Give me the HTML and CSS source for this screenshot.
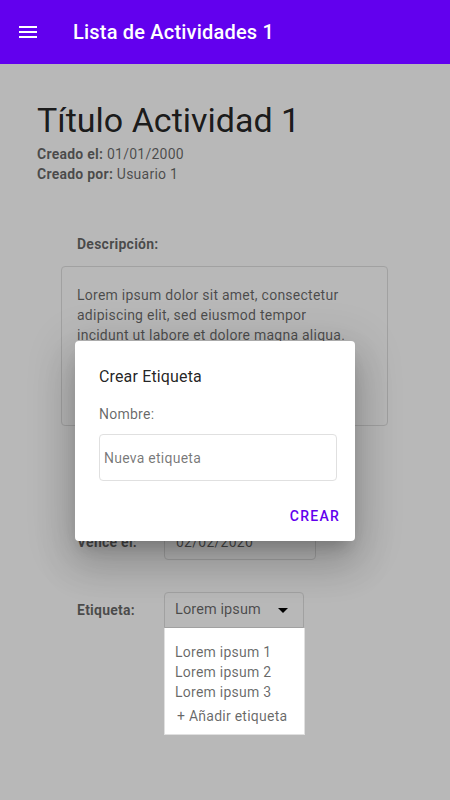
FILE: index.html
```html
<!DOCTYPE html>
<html lang="es">
<head>
<meta charset="utf-8">
<title>Lista de Actividades 1</title>
<link rel="stylesheet" href="styles.css">
</head>
<body>
<header class="appbar">
  <svg class="menu-icon" width="24" height="24" viewBox="0 0 24 24"><path d="M3 18h18v-2H3v2zm0-5h18v-2H3v2zm0-7v2h18V6H3z" fill="#fff"/></svg>
  <span class="appbar-title">Lista de Actividades 1</span>
</header>
<main class="content">
  <h1 class="title">Título Actividad 1</h1>
  <p class="meta"><b>Creado el:</b> 01/01/2000</p>
  <p class="meta"><b>Creado por:</b> Usuario 1</p>

  <section class="fields">
    <div class="field-label">Descripción:</div>
    <div class="desc-box">Lorem ipsum dolor sit amet, consectetur adipiscing elit, sed eiusmod tempor incidunt ut labore et dolore magna aliqua.</div>

    <div class="row row-first">
      <span class="field-label">Inicia el:</span>
      <div class="input-box date">01/01/2020</div>
    </div>
    <div class="row">
      <span class="field-label">Vence el:</span>
      <div class="input-box date">02/02/2020</div>
    </div>
    <div class="row">
      <span class="field-label">Etiqueta:</span>
      <div class="select-wrap">
        <div class="input-box select">
          <span>Lorem ipsum</span>
          <svg class="arrow" width="24" height="24" viewBox="0 0 24 24"><path d="M7 10l5 5 5-5z" fill="#000"/></svg>
        </div>
        <ul class="menu">
          <li>Lorem ipsum 1</li>
          <li>Lorem ipsum 2</li>
          <li>Lorem ipsum 3</li>
          <li class="menu-add">+ Añadir etiqueta</li>
        </ul>
      </div>
    </div>
  </section>
</main>

<div class="scrim"></div>

<div class="dialog">
  <h2 class="dialog-title">Crear Etiqueta</h2>
  <div class="dialog-label">Nombre:</div>
  <div class="dialog-input">Nueva etiqueta</div>
  <div class="dialog-actions">
    <button class="btn-text">CREAR</button>
  </div>
</div>
</body>
</html>
```

FILE: styles.css
```css
* { box-sizing: border-box; }

html, body {
  margin: 0;
  padding: 0;
  height: 100%;
}

body {
  font-family: Roboto, "Noto Sans", "Liberation Sans", sans-serif;
  background: #ffffff;
  color: rgba(0, 0, 0, 0.87);
  position: relative;
  overflow: hidden;
}

.appbar {
  height: 64px;
  background: #6200ee;
  display: flex;
  align-items: center;
  padding-left: 16px;
  gap: 33px;
  position: relative;
  z-index: 5;
}

.menu-icon { display: block; flex: none; }

.appbar-title {
  color: #ffffff;
  font-size: 20px;
  font-weight: 500;
  letter-spacing: 0.2px;
  line-height: 24px;
}

.content {
  padding: 36px 37px 0 37px;
}

.title {
  margin: 0;
  font-size: 34px;
  font-weight: 400;
  line-height: 40px;
  color: rgba(0, 0, 0, 0.87);
}

.meta {
  margin: 0;
  font-size: 14px;
  line-height: 20px;
  letter-spacing: 0.25px;
  color: rgba(0, 0, 0, 0.6);
}

.meta:first-of-type { margin-top: 4px; }

.meta b { font-weight: 700; }

.fields {
  margin-top: 50px;
  padding-left: 40px;
}

.field-label {
  font-size: 14px;
  font-weight: 700;
  line-height: 20px;
  letter-spacing: 0.25px;
  color: rgba(0, 0, 0, 0.6);
}

.desc-box {
  margin: 12px 0 0 -16px;
  width: 327px;
  height: 160px;
  border: 1px solid #e0e0e0;
  border-radius: 4px;
  padding: 18px 30px 18px 15px;
  font-size: 14px;
  line-height: 20px;
  letter-spacing: 0.25px;
  color: rgba(0, 0, 0, 0.6);
}

.row {
  display: flex;
  align-items: center;
  margin-top: 32px;
}

.row-first { margin-top: 30px; }

.row > .field-label {
  width: 87px;
  flex: none;
}

.input-box {
  height: 36px;
  border: 1px solid #e0e0e0;
  border-radius: 4px;
  font-size: 14px;
  line-height: 20px;
  letter-spacing: 0.25px;
  color: rgba(0, 0, 0, 0.6);
  display: flex;
  align-items: center;
  padding-left: 11px;
}

.date { width: 152px; }

.select-wrap {
  position: relative;
  width: 140px;
}

.select {
  width: 140px;
  padding-left: 10px;
  justify-content: space-between;
  padding-right: 8px;
  font-size: 14.5px;
  letter-spacing: 0.1px;
  border-bottom-left-radius: 0;
  border-bottom-right-radius: 0;
}

.arrow { display: block; flex: none; }

.menu {
  position: absolute;
  top: 36px;
  left: 0;
  width: 141px;
  margin: 0;
  padding: 14px 0 8px 0;
  list-style: none;
  background: #ffffff;
  border: 1px solid #e0e0e0;
  border-top: none;
  z-index: 20;
}

.menu li {
  font-size: 14px;
  line-height: 20px;
  letter-spacing: 0.25px;
  color: rgba(0, 0, 0, 0.6);
  padding-left: 10px;
}

.menu .menu-add {
  margin-top: 4px;
  padding-left: 12px;
}

.scrim {
  position: absolute;
  top: 64px;
  left: 0;
  right: 0;
  bottom: 0;
  background: rgba(0, 0, 0, 0.28);
  z-index: 10;
}

.dialog {
  position: absolute;
  left: 75px;
  top: 341px;
  width: 280px;
  height: 200px;
  background: #ffffff;
  border-radius: 4px;
  padding: 24px 18px 0 24px;
  z-index: 30;
  box-shadow: 0 11px 15px -7px rgba(0, 0, 0, 0.2),
              0 24px 38px 3px rgba(0, 0, 0, 0.14),
              0 9px 46px 8px rgba(0, 0, 0, 0.12);
}

.dialog-title {
  margin: 0;
  font-size: 16px;
  font-weight: 400;
  line-height: 24px;
  letter-spacing: 0.15px;
  color: rgba(0, 0, 0, 0.87);
}

.dialog-label {
  margin-top: 15px;
  font-size: 14px;
  line-height: 20px;
  letter-spacing: 0.25px;
  color: rgba(0, 0, 0, 0.6);
}

.dialog-input {
  margin-top: 10px;
  width: 238px;
  height: 47px;
  border: 1px solid #e0e0e0;
  border-radius: 4px;
  padding-left: 4px;
  display: flex;
  align-items: center;
  font-size: 14px;
  letter-spacing: 0.25px;
  color: rgba(0, 0, 0, 0.54);
}

.dialog-actions {
  display: flex;
  justify-content: flex-end;
  margin: 17px -11px 0 0;
}

.btn-text {
  font-family: Roboto, "Noto Sans", "Liberation Sans", sans-serif;
  background: none;
  border: none;
  height: 36px;
  padding: 0 8px;
  font-size: 14px;
  font-weight: 500;
  letter-spacing: 1.25px;
  color: #6200ee;
  cursor: pointer;
}
```
